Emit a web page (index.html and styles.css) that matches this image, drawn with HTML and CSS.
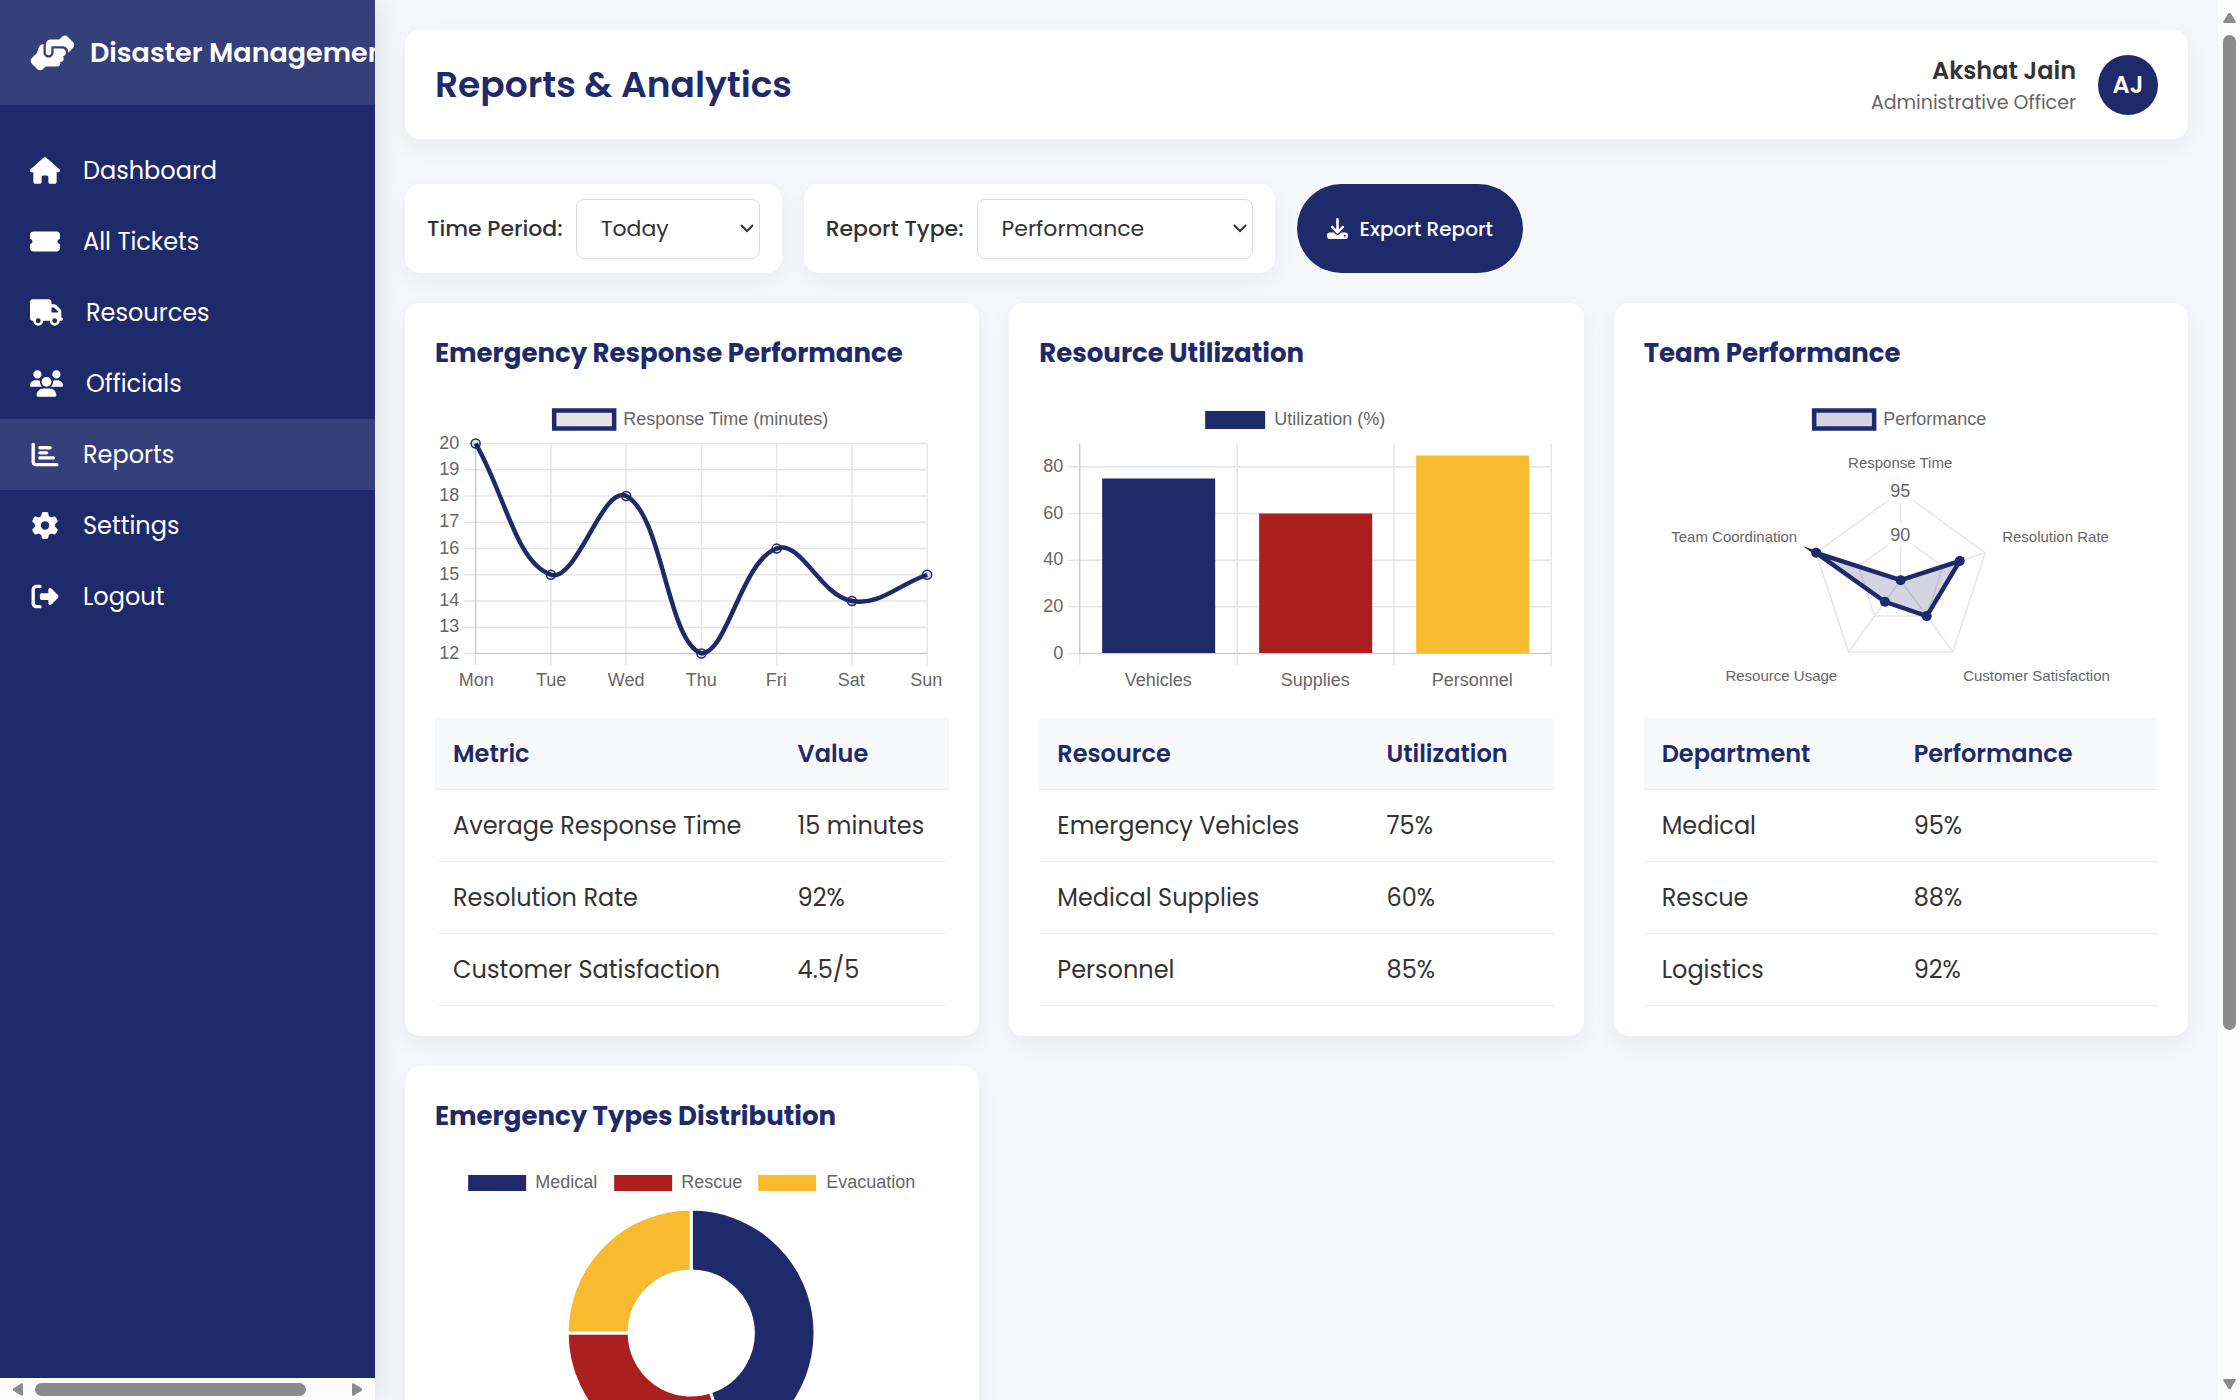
FILE: index.html
```html
<!DOCTYPE html>
<html lang="en">
<head>
<meta charset="utf-8">
<meta name="viewport" content="width=device-width, initial-scale=1">
<title>Reports &amp; Analytics</title>
<link rel="stylesheet" href="styles.css">
</head>
<body>
<div class="app">
  <aside class="sidebar">
    <div class="sidebar-scroll">
      <div class="brand">
        <svg class="brand-icon" viewBox="0 0 640 512" aria-hidden="true"><path d="M544 248v3.3l69.7-69.7c21.9-21.9 21.9-57.3 0-79.2L535.6 24.4c-21.9-21.9-57.3-21.9-79.2 0L416.3 64.5c-2.7-.3-5.5-.5-8.3-.5H296c-37.1 0-67.6 28-71.6 64H224V248c0 22.1 17.9 40 40 40s40-17.9 40-40V176c0 0 0-.1 0-.1V160l16 0 136 0c0 0 0 0 .1 0H464c44.2 0 80 35.8 80 80v8zM336 192v56c0 39.8-32.2 72-72 72s-72-32.2-72-72V129.4c-35.9 6.2-65.8 32.3-76 68.2L99.5 255.2 26.3 328.4c-21.9 21.9-21.9 57.3 0 79.2l78.1 78.1c21.9 21.9 57.3 21.9 79.2 0l37.7-37.7c.9 0 1.8 .1 2.7 .1H384c26.5 0 48-21.5 48-48c0-5.6-1-11-2.7-16H432c26.5 0 48-21.5 48-48c0-12.8-5-24.4-13.2-33c25.7-5 45.1-27.6 45.2-54.8v-.4c-.1-30.8-25.1-55.8-56-55.8c0 0 0 0 0 0l-120 0z"/></svg>
        <span class="brand-name">Disaster Management</span>
      </div>
      <nav class="nav">
        <a class="nav-link" href="#dashboard"><svg class="nav-icon" viewBox="0 0 576 512" aria-hidden="true"><path d="M575.8 255.5c0 18-15 32.1-32 32.1h-32l.7 160.2c0 2.7-.2 5.4-.5 8.1V472c0 22.1-17.9 40-40 40H456c-1.1 0-2.2 0-3.3-.1c-1.4 .1-2.8 .1-4.2 .1H416 392c-22.1 0-40-17.9-40-40V448 384c0-17.7-14.3-32-32-32H256c-17.7 0-32 14.3-32 32v64 24c0 22.1-17.9 40-40 40H160 128.1c-1.5 0-3-.1-4.5-.2c-1.2 .1-2.4 .2-3.6 .2H104c-22.1 0-40-17.9-40-40V360c0-.9 0-1.9 .1-2.8V287.6H32c-18 0-32-14-32-32.1c0-9 3-17 10-24L266.4 8c7-7 15-8 22-8s15 2 21 7L564.8 231.5c8 7 12 15 11 24z"/></svg><span>Dashboard</span></a>
        <a class="nav-link" href="#tickets"><svg class="nav-icon" viewBox="0 0 576 512" aria-hidden="true"><path d="M64 64C28.7 64 0 92.7 0 128v64c0 8.8 7.4 15.7 15.7 18.6C34.5 217.1 48 235 48 256s-13.5 38.9-32.3 45.4C7.4 304.3 0 311.2 0 320v64c0 35.3 28.7 64 64 64H512c35.3 0 64-28.7 64-64V320c0-8.8-7.4-15.7-15.7-18.6C541.5 294.9 528 277 528 256s13.5-38.9 32.3-45.4c8.3-2.9 15.7-9.8 15.7-18.6V128c0-35.3-28.7-64-64-64H64z"/></svg><span>All Tickets</span></a>
        <a class="nav-link" href="#resources"><svg class="nav-icon nav-icon-wide" viewBox="0 0 640 512" aria-hidden="true"><path d="M48 0C21.5 0 0 21.5 0 48V368c0 26.5 21.5 48 48 48H64c0 53 43 96 96 96s96-43 96-96H384c0 53 43 96 96 96s96-43 96-96h32c17.7 0 32-14.3 32-32s-14.3-32-32-32V288 256 237.3c0-17-6.7-33.3-18.7-45.3L512 114.7c-12-12-28.3-18.7-45.3-18.7H416V48c0-26.5-21.5-48-48-48H48zM416 160h50.7L544 237.3V256H416V160zM112 416a48 48 0 1 1 96 0 48 48 0 1 1 -96 0zm368-48a48 48 0 1 1 0 96 48 48 0 1 1 0-96z"/></svg><span>Resources</span></a>
        <a class="nav-link" href="#officials"><svg class="nav-icon nav-icon-wide" viewBox="0 0 640 512" aria-hidden="true"><path d="M144 0a80 80 0 1 1 0 160A80 80 0 1 1 144 0zM512 0a80 80 0 1 1 0 160A80 80 0 1 1 512 0zM0 298.7C0 239.8 47.8 192 106.7 192h42.7c15.9 0 31 3.5 44.6 9.7c-1.3 7.2-1.9 14.7-1.9 22.3c0 38.2 16.8 72.5 43.3 96c-.2 0-.4 0-.7 0H21.3C9.6 320 0 310.4 0 298.7zM405.3 320c-.2 0-.4 0-.7 0c26.6-23.5 43.3-57.8 43.3-96c0-7.6-.7-15-1.9-22.3c13.6-6.3 28.7-9.7 44.6-9.7h42.7C592.2 192 640 239.8 640 298.7c0 11.8-9.6 21.3-21.3 21.3H405.3zM224 224a96 96 0 1 1 192 0 96 96 0 1 1 -192 0zM128 485.3C128 411.7 187.7 352 261.3 352H378.7C452.3 352 512 411.7 512 485.3c0 14.7-11.9 26.7-26.7 26.7H154.7c-14.7 0-26.7-11.9-26.7-26.7z"/></svg><span>Officials</span></a>
        <a class="nav-link active" href="#reports" aria-current="page"><svg class="nav-icon" viewBox="0 0 512 512" aria-hidden="true"><path d="M32 32c17.7 0 32 14.3 32 32V400c0 8.8 7.2 16 16 16H480c17.7 0 32 14.3 32 32s-14.3 32-32 32H80c-44.2 0-80-35.8-80-80V64C0 46.3 14.3 32 32 32zm96 96c0-17.7 14.3-32 32-32l192 0c17.7 0 32 14.3 32 32s-14.3 32-32 32H160c-17.7 0-32-14.3-32-32zm32 64H288c17.7 0 32 14.3 32 32s-14.3 32-32 32H160c-17.7 0-32-14.3-32-32s14.3-32 32-32zm0 96H416c17.7 0 32 14.3 32 32s-14.3 32-32 32H160c-17.7 0-32-14.3-32-32s14.3-32 32-32z"/></svg><span>Reports</span></a>
        <a class="nav-link" href="#settings"><svg class="nav-icon" viewBox="0 0 512 512" aria-hidden="true"><path d="M495.9 166.6c3.2 8.7 .5 18.4-6.4 24.6l-43.3 39.4c1.1 8.3 1.7 16.8 1.7 25.4s-.6 17.1-1.7 25.4l43.3 39.4c6.9 6.2 9.6 15.9 6.4 24.6c-4.4 11.9-9.7 23.3-15.8 34.3l-4.7 8.1c-6.6 11-14 21.4-22.1 31.2c-5.9 7.2-15.7 9.6-24.5 6.8l-55.7-17.7c-13.4 10.3-28.2 18.9-44 25.4l-12.5 57.1c-2 9.1-9 16.3-18.2 17.8c-13.8 2.3-28 3.5-42.5 3.5s-28.7-1.2-42.5-3.5c-9.2-1.5-16.2-8.7-18.2-17.8l-12.5-57.1c-15.8-6.5-30.6-15.1-44-25.4L83.1 425.9c-8.8 2.8-18.6 .3-24.5-6.8c-8.1-9.8-15.5-20.2-22.1-31.2l-4.7-8.1c-6.1-11-11.4-22.4-15.8-34.3c-3.2-8.7-.5-18.4 6.4-24.6l43.3-39.4C64.6 273.1 64 264.6 64 256s.6-17.1 1.7-25.4L22.4 191.2c-6.9-6.2-9.6-15.9-6.4-24.6c4.4-11.9 9.7-23.3 15.8-34.3l4.7-8.1c6.6-11 14-21.4 22.1-31.2c5.9-7.2 15.7-9.6 24.5-6.8l55.7 17.7c13.4-10.3 28.2-18.9 44-25.4l12.5-57.1c2-9.1 9-16.3 18.2-17.8C227.3 1.2 241.5 0 256 0s28.7 1.2 42.5 3.5c9.2 1.5 16.2 8.7 18.2 17.8l12.5 57.1c15.8 6.5 30.6 15.1 44 25.4l55.7-17.7c8.8-2.8 18.6-.3 24.5 6.8c8.1 9.8 15.5 20.2 22.1 31.2l4.7 8.1c6.1 11 11.4 22.4 15.8 34.3zM256 336a80 80 0 1 0 0-160 80 80 0 1 0 0 160z"/></svg><span>Settings</span></a>
        <a class="nav-link" href="#logout"><svg class="nav-icon" viewBox="0 0 512 512" aria-hidden="true"><path d="M377.9 105.9L500.7 228.7c7.2 7.2 11.3 17.1 11.3 27.3s-4.1 20.1-11.3 27.3L377.9 406.1c-6.4 6.4-15 9.9-24 9.9c-18.7 0-33.9-15.2-33.9-33.9l0-62.1-128 0c-17.7 0-32-14.3-32-32l0-64c0-17.7 14.3-32 32-32l128 0 0-62.1c0-18.7 15.2-33.9 33.9-33.9c9 0 17.6 3.6 24 9.9zM160 96L96 96c-17.7 0-32 14.3-32 32l0 256c0 17.7 14.3 32 32 32l64 0c17.7 0 32 14.3 32 32s-14.3 32-32 32l-64 0c-53 0-96-43-96-96L0 128C0 75 43 32 96 32l64 0c17.7 0 32 14.3 32 32s-14.3 32-32 32z"/></svg><span>Logout</span></a>
      </nav>
    </div>
    <div class="rail rail-x" aria-hidden="true">
      <svg class="rail-arrow" viewBox="0 0 12 15"><path d="M10 1 11 2v11l-1 1L1 8.500V6.500z"/></svg>
      <div class="rail-track"><div class="rail-thumb thumb-x"></div></div>
      <svg class="rail-arrow" viewBox="0 0 12 15"><path d="M2 1 1 2v11l1 1 9-5.500V6.500z"/></svg>
    </div>
  </aside>

  <main class="main">
    <header class="panel topbar">
      <h1>Reports &amp; Analytics</h1>
      <div class="user">
        <div class="user-text">
          <div class="user-name">Akshat Jain</div>
          <div class="user-role">Administrative Officer</div>
        </div>
        <div class="avatar">AJ</div>
      </div>
    </header>

    <div class="filters">
      <div class="panel filter">
        <label for="period">Time Period:</label>
        <div class="select-wrap">
          <select id="period" class="select select-short"><option>Today</option><option>This Week</option><option>This Month</option></select>
          <svg class="chevron" viewBox="0 0 14 9" aria-hidden="true"><path d="M1 1l6 6 6-6"/></svg>
        </div>
      </div>
      <div class="panel filter">
        <label for="type">Report Type:</label>
        <div class="select-wrap">
          <select id="type" class="select select-long"><option>Performance</option><option>Resources</option></select>
          <svg class="chevron" viewBox="0 0 14 9" aria-hidden="true"><path d="M1 1l6 6 6-6"/></svg>
        </div>
      </div>
      <button class="export" type="button">
        <svg class="export-icon" viewBox="0 0 512 512" aria-hidden="true"><path d="M288 32c0-17.7-14.3-32-32-32s-32 14.3-32 32V274.7l-73.4-73.4c-12.5-12.5-32.8-12.5-45.3 0s-12.5 32.8 0 45.3l128 128c12.5 12.5 32.8 12.5 45.3 0l128-128c12.5-12.5 12.5-32.8 0-45.3s-32.8-12.5-45.3 0L288 274.7V32zM64 352c-35.3 0-64 28.7-64 64v32c0 35.3 28.7 64 64 64H448c35.3 0 64-28.7 64-64V416c0-35.3-28.7-64-64-64H346.5l-45.3 45.3c-25 25-65.5 25-90.5 0L165.5 352H64zm368 56a24 24 0 1 1 0 48 24 24 0 1 1 0-48z"/></svg>
        <span>Export Report</span>
      </button>
    </div>

    <div class="cards">
      <section class="panel card">
        <h2>Emergency Response Performance</h2>
        <svg class="chart" viewBox="0 0 514 300" role="img" aria-label="Response time in minutes by day">
          <rect class="legend-box grey" x="119" y="7.500" width="60" height="18"/>
          <text x="188" y="22">Response Time (minutes)</text>
          <path class="grid" d="M29 40.500H492M29 66.750H492M29 93H492M29 119.250H492M29 145.500H492M29 171.750H492M29 198H492M29 224.250H492M29 250.500H492M40.500 40.500V262M115.750 40.500V262M191 40.500V262M266.250 40.500V262M341.500 40.500V262M416.750 40.500V262M492 40.500V262"/>
          <path class="grid" d="M40.500 40.500V250.500H492"/>
          <g class="end"><text x="24" y="46">20</text><text x="24" y="72">19</text><text x="24" y="98">18</text><text x="24" y="124">17</text><text x="24" y="151">16</text><text x="24" y="177">15</text><text x="24" y="203">14</text><text x="24" y="229">13</text><text x="24" y="256">12</text></g>
          <g class="mid"><text x="41" y="283">Mon</text><text x="116" y="283">Tue</text><text x="191" y="283">Wed</text><text x="266" y="283">Thu</text><text x="341" y="283">Fri</text><text x="416" y="283">Sat</text><text x="491" y="283">Sun</text></g>
          <path class="line" d="M40.500 40.500C70.600 93 80.700 159.500 115.750 171.750C140.900 180.500 167.900 80.900 191 93C228.100 112.400 231.700 238.400 266.250 250.500C291.900 250.500 306.300 157.800 341.500 145.500C366.500 136.800 384.500 192.400 416.750 198C444.700 202.900 461.900 182.250 492 171.750"/>
          <g class="dot-open"><circle cx="40.500" cy="40.500" r="4.500"/><circle cx="115.750" cy="171.750" r="4.500"/><circle cx="191" cy="93" r="4.500"/><circle cx="266.250" cy="250.500" r="4.500"/><circle cx="341.500" cy="145.500" r="4.500"/><circle cx="416.750" cy="198" r="4.500"/><circle cx="492" cy="171.750" r="4.500"/></g>
        </svg>
        <table class="table split-a">
          <thead><tr><th scope="col">Metric</th><th scope="col">Value</th></tr></thead>
          <tbody>
            <tr><td>Average Response Time</td><td>15 minutes</td></tr>
            <tr><td>Resolution Rate</td><td>92%</td></tr>
            <tr><td>Customer Satisfaction</td><td>4.5/5</td></tr>
          </tbody>
        </table>
      </section>

      <section class="panel card">
        <h2>Resource Utilization</h2>
        <svg class="chart" viewBox="0 0 514 300" role="img" aria-label="Utilization in percent by resource">
          <rect class="navy" x="166" y="8" width="60" height="18"/>
          <text x="235" y="22">Utilization (%)</text>
          <path class="grid" d="M29 63.750H512M29 110.500H512M29 157.250H512M29 203.750H512M29 250.500H512M40.500 40.500V262M198 40.500V262M355 40.500V262M512 40.500V262"/>
          <path class="grid" d="M40.500 40.500V250.500H512"/>
          <g class="end"><text x="24" y="69">80</text><text x="24" y="116">60</text><text x="24" y="162">40</text><text x="24" y="209">20</text><text x="24" y="256">0</text></g>
          <rect class="navy" x="63" y="75.500" width="113" height="174.500"/>
          <rect class="red" x="220" y="110.500" width="113" height="139.500"/>
          <rect class="gold" x="377" y="52.500" width="113" height="197.500"/>
          <g class="mid"><text x="119" y="283">Vehicles</text><text x="276" y="283">Supplies</text><text x="433" y="283">Personnel</text></g>
        </svg>
        <table class="table split-b">
          <thead><tr><th scope="col">Resource</th><th scope="col">Utilization</th></tr></thead>
          <tbody>
            <tr><td>Emergency Vehicles</td><td>75%</td></tr>
            <tr><td>Medical Supplies</td><td>60%</td></tr>
            <tr><td>Personnel</td><td>85%</td></tr>
          </tbody>
        </table>
      </section>

      <section class="panel card">
        <h2>Team Performance</h2>
        <svg class="chart" viewBox="1 0 514 300" role="img" aria-label="Team performance radar">
          <rect class="legend-box tint" x="171" y="7.500" width="60" height="18"/>
          <text x="240" y="22">Performance</text>
          <path class="grid" d="M257.500 88.400L342 149.800L309.700 249H205.300L173 149.800zM257.500 132.800L299.700 163.500L283.600 213.100H231.400L215.300 163.500zM257.500 177.200V88.400M257.500 177.200L342 149.800M257.500 177.200L309.700 249M257.500 177.200L205.300 249M257.500 177.200L173 149.800"/>
          <path class="backdrop" d="M244 76h27v24h-27zM244 120h27v24h-27z"/>
          <path class="area" d="M257.500 177.200L316.600 158L283.600 213.100L241.800 198.800L173 149.800z"/>
          <g class="dot"><circle cx="257.500" cy="177.200" r="5"/><circle cx="316.600" cy="158" r="5"/><circle cx="283.600" cy="213.100" r="5"/><circle cx="241.800" cy="198.800" r="5"/><circle cx="173" cy="149.800" r="5"/></g>
          <g class="mid"><text x="257" y="94">95</text><text x="257" y="138">90</text></g>
          <g class="small"><text class="mid" x="257" y="65">Response Time</text><text x="359" y="139">Resolution Rate</text><text x="320" y="278">Customer Satisfaction</text><text class="end" x="194" y="278">Resource Usage</text><text class="end" x="154" y="139">Team Coordination</text></g>
        </svg>
        <table class="table split-c">
          <thead><tr><th scope="col">Department</th><th scope="col">Performance</th></tr></thead>
          <tbody>
            <tr><td>Medical</td><td>95%</td></tr>
            <tr><td>Rescue</td><td>88%</td></tr>
            <tr><td>Logistics</td><td>92%</td></tr>
          </tbody>
        </table>
      </section>

      <section class="panel card">
        <h2>Emergency Types Distribution</h2>
        <svg class="chart" viewBox="0 0 514 300" role="img" aria-label="Share of emergency types">
          <rect class="navy" x="33" y="9" width="58" height="16"/><text x="100" y="22">Medical</text>
          <rect class="red" x="179" y="9" width="58" height="16"/><text x="246" y="22">Rescue</text>
          <rect class="gold" x="323" y="9" width="58" height="16"/><text x="391" y="22">Evacuation</text>
          <g class="slices">
            <path class="navy" d="M256 43A124 124 0 0 1 294.300 284.900L275.200 226A62 62 0 0 0 256 105z"/>
            <path class="red" d="M294.300 284.900A124 124 0 0 1 132 167H194A62 62 0 0 0 275.200 226z"/>
            <path class="gold" d="M132 167A124 124 0 0 1 256 43V105A62 62 0 0 0 194 167z"/>
          </g>
        </svg>
      </section>
    </div>
  </main>

  <div class="rail rail-y" aria-hidden="true">
    <svg class="rail-arrow" viewBox="0 0 15 12"><path d="M1 10 2 11h11l1-1L8.500 1H6.500z"/></svg>
    <div class="rail-track"><div class="rail-thumb thumb-y"></div></div>
    <svg class="rail-arrow" viewBox="0 0 15 12"><path d="M1 2 2 1h11l1 1-5.500 9H6.500z"/></svg>
  </div>
</div>
</body>
</html>
```
FILE: styles.css
```css
:root {
  --navy: #1f2a6b;
  --red: #ab1f1e;
  --gold: #f8bb30;
  --ink: #333;
  --page: #f5f7fb;
}

* { box-sizing: border-box; }

body {
  margin: 0;
  font-family: Poppins, Inter, sans-serif;
  font-size: 24px;
  color: var(--ink);
  background: var(--page);
}

.app {
  display: flex;
  height: 100vh;
  overflow: hidden;
}

/* Sidebar */
.sidebar {
  flex: 0 0 375px;
  min-width: 0;
  display: flex;
  flex-direction: column;
  background: var(--navy);
  color: #fff;
  box-shadow: 3px 0 23px rgba(0, 0, 0, 0.1);
}

.sidebar-scroll {
  flex: 1;
  overflow: hidden;
}

.brand {
  display: flex;
  align-items: center;
  gap: 15px;
  height: 105px;
  padding: 0 30px;
  background: rgba(255, 255, 255, 0.1);
}

.brand-icon {
  flex: none;
  width: 45px;
  height: 36px;
  fill: #fff;
}

.brand-name {
  font-size: 27px;
  font-weight: 600;
  white-space: nowrap;
}

.nav { padding: 30px 0; }

.nav-link {
  display: flex;
  align-items: center;
  gap: 23px;
  height: 71px;
  padding: 0 30px;
  color: #fff;
  text-decoration: none;
}

.nav-link.active { background: rgba(255, 255, 255, 0.1); }

.nav-icon {
  width: 30px;
  height: 27px;
  fill: #fff;
}

.nav-icon-wide { width: 33px; }

/* Scroll rails */
.rail {
  display: flex;
  align-items: center;
  background: #fcfcfc;
}

.rail-x {
  height: 22px;
  padding: 0 12px;
  gap: 11px;
}

.rail-y {
  flex: 0 0 22px;
  flex-direction: column;
  padding: 12px 0 10px;
  gap: 11px;
}

.rail-arrow {
  flex: none;
  fill: #8b8b8b;
}

.rail-x .rail-arrow { width: 12px; height: 15px; }
.rail-y .rail-arrow { width: 15px; height: 12px; }
.rail-track { flex: 1; }

.rail-thumb {
  border-radius: 7px;
  background: #8b8b8b;
}

.thumb-x { width: 89%; height: 13px; }
.thumb-y { width: 13px; height: 74.7%; }

/* Main column */
.main {
  flex: 1;
  min-width: 0;
  padding: 30px;
  overflow-y: auto;
  scrollbar-width: none;
}

.panel {
  background: #fff;
  border-radius: 15px;
  box-shadow: 0 8px 23px rgba(0, 0, 0, 0.05);
}

.topbar {
  display: flex;
  align-items: center;
  justify-content: space-between;
  height: 109px;
  padding: 0 30px;
  margin-bottom: 45px;
}

h1 {
  margin: 0;
  font-size: 36px;
  font-weight: 600;
  color: var(--navy);
}

.user {
  display: flex;
  align-items: center;
  gap: 22px;
}

.user-text { text-align: right; }

.user-name {
  line-height: 36px;
  font-weight: 600;
}

.user-role {
  font-size: 19px;
  line-height: 28px;
  color: #666;
}

.avatar {
  display: grid;
  place-items: center;
  width: 60px;
  height: 60px;
  border-radius: 50%;
  background: var(--navy);
  color: #fff;
  font-weight: 600;
}

.filters {
  display: flex;
  gap: 22px;
  margin-bottom: 30px;
}

.filter {
  display: flex;
  align-items: center;
  gap: 13px;
  height: 89px;
  padding: 0 22px;
  font-size: 22px;
  font-weight: 500;
}

.select-wrap { position: relative; }

.select {
  appearance: none;
  height: 60px;
  padding: 0 24px;
  border: 1px solid #ddd;
  border-radius: 8px;
  background: #fff;
  color: var(--ink);
  font-family: inherit;
  font-size: 22px;
}

.select-short { width: 184px; }
.select-long { width: 276px; }

.chevron {
  position: absolute;
  right: 6px;
  top: 25px;
  width: 14px;
  height: 9px;
  fill: none;
  stroke: var(--ink);
  stroke-width: 2;
  pointer-events: none;
}

.export {
  display: flex;
  align-items: center;
  gap: 12px;
  padding: 0 30px;
  border: 0;
  border-radius: 45px;
  background: var(--navy);
  color: #fff;
  font-family: inherit;
  font-size: 20px;
  font-weight: 500;
}

.export-icon {
  width: 21px;
  height: 21px;
  fill: #fff;
}

/* Report cards */
.cards {
  display: grid;
  grid-template-columns: repeat(3, minmax(0, 1fr));
  gap: 30px;
}

.card { padding: 30px; }

h2 {
  margin: 0 0 30px;
  font-size: 26px;
  line-height: 40px;
  font-weight: 700;
  color: var(--navy);
}

.chart {
  display: block;
  width: 100%;
  height: 300px;
  margin-bottom: 15px;
  font-family: "Liberation Sans", Arial, sans-serif;
  font-size: 18px;
}

.chart text { fill: #666; }
.chart .small { font-size: 15px; }
.mid { text-anchor: middle; }
.end { text-anchor: end; }
.navy { fill: var(--navy); }
.red { fill: var(--red); }
.gold { fill: var(--gold); }
.grey { fill: #e5e5e5; }
.tint { fill: #d2d4e1; }

.legend-box {
  stroke: var(--navy);
  stroke-width: 4.5;
}

.grid {
  fill: none;
  stroke: rgba(0, 0, 0, 0.1);
  stroke-width: 1.5;
}

.line {
  fill: none;
  stroke: var(--navy);
  stroke-width: 4.5;
}

.dot-open {
  fill: rgba(0, 0, 0, 0.1);
  stroke: var(--navy);
  stroke-width: 1.5;
}

.dot { fill: var(--navy); }
.backdrop { fill: rgba(255, 255, 255, 0.75); }

.area {
  fill: rgba(31, 42, 107, 0.2);
  stroke: var(--navy);
  stroke-width: 4.5;
  stroke-miterlimit: 10;
}

.slices {
  stroke: #fff;
  stroke-width: 3;
}

.table {
  width: 100%;
  table-layout: fixed;
  border-collapse: collapse;
}

.table th,
.table td {
  height: 72px;
  padding: 0 18px;
  border-bottom: 1px solid #eee;
  text-align: left;
  white-space: nowrap;
}

.table th {
  height: 71px;
  background: #f8f9fb;
  color: var(--navy);
  font-weight: 600;
}

.split-a th:first-child { width: 67%; }
.split-b th:first-child { width: 64%; }
.split-c th:first-child { width: 49%; }
```
